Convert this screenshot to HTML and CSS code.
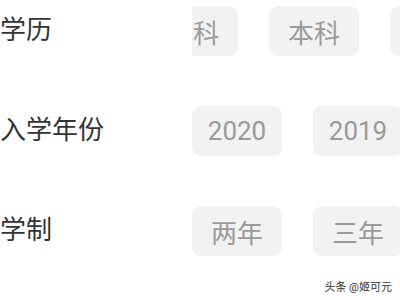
FILE: index.html
```html
<!DOCTYPE html>
<html lang="zh-CN">
<head>
  <meta charset="UTF-8" />
  <meta name="viewport" content="width=device-width, initial-scale=1.0" />
  <title>筛选</title>
  <link rel="stylesheet" href="styles.css">
</head>
<body>
  <div class="filter">
    <div class="row">
      <div class="label">学历</div>
      <div class="options">
        <div class="track scrolled">
          <span class="chip">专科</span>
          <span class="chip">本科</span>
          <span class="chip">硕士</span>
        </div>
      </div>
    </div>

    <div class="row">
      <div class="label">入学年份</div>
      <div class="options">
        <div class="track">
          <span class="chip">2020</span>
          <span class="chip">2019</span>
          <span class="chip">2018</span>
        </div>
      </div>
    </div>

    <div class="row">
      <div class="label">学制</div>
      <div class="options">
        <div class="track">
          <span class="chip">两年</span>
          <span class="chip">三年</span>
          <span class="chip">四年</span>
        </div>
      </div>
    </div>
  </div>

  <div class="watermark">头条 @姬可元</div>
</body>
</html>
```

FILE: styles.css
```css
html, body {
  margin: 0;
  padding: 0;
  background: #fff;
}
body {
  font-family: Roboto, "Noto Sans CJK SC", sans-serif;
  width: 400px;
  height: 300px;
  overflow: hidden;
  position: relative;
}
.filter {
  display: flex;
  flex-direction: column;
  gap: 50px;
  padding-top: 6px;
}
.row {
  display: flex;
  align-items: center;
  height: 50px;
}
.label {
  width: 192px;
  flex-shrink: 0;
  font-size: 26px;
  color: #333;
  padding-bottom: 7px;
  box-sizing: border-box;
}
.options {
  flex: 1;
  overflow: hidden;
}
.track {
  display: flex;
  gap: 31px;
}
.scrolled {
  transform: translateX(-44px);
}
.chip {
  flex-shrink: 0;
  width: 90px;
  height: 50px;
  border-radius: 9px;
  background: #f2f2f2;
  color: #9a9a9a;
  font-size: 26px;
  display: flex;
  align-items: center;
  justify-content: center;
}
.watermark {
  position: absolute;
  right: 8px;
  bottom: 6px;
  font-size: 11px;
  color: #333;
}
```
